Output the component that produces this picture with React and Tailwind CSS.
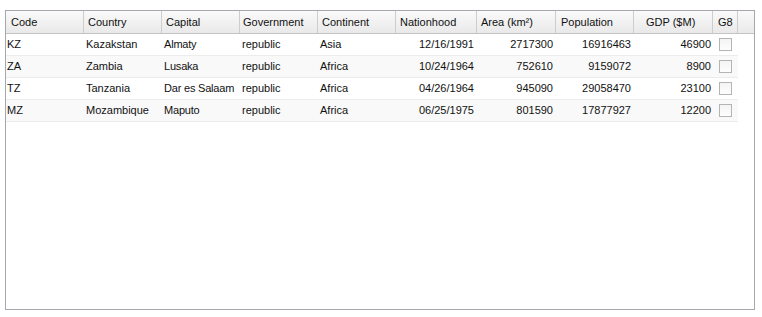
import React from "react";

const cols = [
  { key: "code", label: "Code", w: 78, align: "left", hp: "pl-[5px]" },
  { key: "country", label: "Country", w: 78, align: "left", hp: "pl-[4px]" },
  { key: "capital", label: "Capital", w: 78, align: "left", hp: "pl-[4px]" },
  { key: "gov", label: "Government", w: 78, align: "left", hp: "pl-[3px]" },
  { key: "cont", label: "Continent", w: 78, align: "left", hp: "pl-[4px]" },
  { key: "nat", label: "Nationhood", w: 81, align: "right", hp: "pl-[4px]" },
  { key: "area", label: "Area (km²)", w: 79, align: "right", hp: "pl-[4px]" },
  { key: "pop", label: "Population", w: 78, align: "right", hp: "pl-[5px]" },
  { key: "gdp", label: "GDP ($M)", w: 79, align: "right", hp: "pl-[12px]" },
  { key: "g8", label: "G8", w: 25, align: "center", hp: "pl-[5px]" },
];

const rows = [
  ["KZ", "Kazakstan", "Almaty", "republic", "Asia", "12/16/1991", "2717300", "16916463", "46900"],
  ["ZA", "Zambia", "Lusaka", "republic", "Africa", "10/24/1964", "752610", "9159072", "8900"],
  ["TZ", "Tanzania", "Dar es Salaam", "republic", "Africa", "04/26/1964", "945090", "29058470", "23100"],
  ["MZ", "Mozambique", "Maputo", "republic", "Africa", "06/25/1975", "801590", "17877927", "12200"],
];

export default function App() {
  return (
    <div className="w-[762px] h-[317px] bg-white pt-[10px] pl-[5px]" style={{ fontFamily: '"Liberation Sans", Arial, sans-serif' }}>
      <div className="w-[750px] h-[300px] border border-[#a6a6ae] bg-white overflow-hidden text-[11px] text-[#111]">
        <div className="flex h-[23px] border-b border-[#c4c4c4] bg-gradient-to-b from-[#fafafa] to-[#e9e9e9]">
          {cols.map((c) => (
            <div
              key={c.key}
              style={{ width: c.w }}
              className={`shrink-0 flex items-center justify-start border-r border-[#cdcdcd] ${c.hp}`}
            >
              {c.label}
            </div>
          ))}
          <div className="flex-1" />
        </div>
        {rows.map((r, ri) => (
          <div key={ri} className={`flex h-[22px] w-[732px] border-b border-[#ececec] ${ri % 2 === 1 ? "bg-[#f9f9f9]" : "bg-white"}`}>
            {cols.map((c, i) => (
              <div
                key={c.key}
                style={{ width: c.w }}
                className={`shrink-0 flex items-center whitespace-nowrap overflow-hidden ${c.align === "right" ? (c.key === "gdp" ? "justify-end pr-[2px]" : "justify-end pr-[3px]") : c.align === "center" ? "justify-center" : i === 0 ? "pl-[1px]" : "pl-[2px]"}`}
              >
                {c.key === "g8" ? (
                  <span className="block w-[13px] h-[13px] border border-[#b4b4b4] bg-gradient-to-b from-[#f4f4f4] to-[#fdfdfd] -ml-[1px]" />
                ) : c.key === "capital" ? (
                  <span className="tracking-[-0.2px]">{r[i]}</span>
                ) : (
                  r[i]
                )}
              </div>
            ))}
          </div>
        ))}
      </div>
    </div>
  );
}
